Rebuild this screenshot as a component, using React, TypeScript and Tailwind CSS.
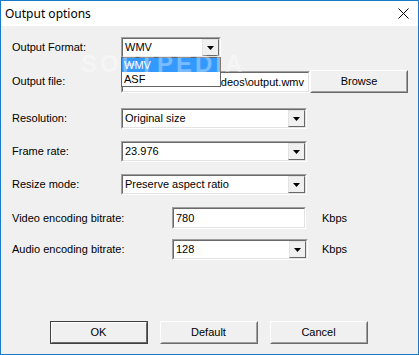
import React from "react";

const Arrow = () => (
  <svg width="7" height="4" viewBox="0 0 7 4">
    <path d="M0 0h7L3.5 4z" fill="#000" />
  </svg>
);

const Combo = ({ value, width }: { value: string; width: string }) => (
  <div
    className={`${width} h-[21px] flex border border-t-[#a0a0a0] border-l-[#a0a0a0] border-r-white border-b-white`}
  >
    <div className="flex-1 flex border border-t-[#696969] border-l-[#696969] border-r-[#e3e3e3] border-b-[#e3e3e3] bg-white">
      <span className="flex-1 pl-[2px] leading-[17px]">{value}</span>
      <div className="w-[17px] h-[17px] flex items-center justify-center bg-[#f0f0f0] border border-t-[#e3e3e3] border-l-[#e3e3e3] border-r-[#696969] border-b-[#696969]">
        <Arrow />
      </div>
    </div>
  </div>
);

const Field = ({ value, width, right }: { value: string; width: string; right?: boolean }) => (
  <div
    className={`${width} h-[22px] flex border border-t-[#a0a0a0] border-l-[#a0a0a0] border-r-white border-b-white`}
  >
    <div
      className={`flex-1 flex border border-t-[#696969] border-l-[#696969] border-r-[#e3e3e3] border-b-[#e3e3e3] bg-white leading-[18px] overflow-hidden whitespace-nowrap ${
        right ? "justify-end pr-[4px]" : "pl-[2px]"
      }`}
    >
      <span className="shrink-0">{value}</span>
    </div>
  </div>
);

const Button = ({ label, main }: { label: string; main?: boolean }) => (
  <div
    className={`w-[98px] h-[23px] flex border ${
      main
        ? "border-[#404040]"
        : "border-t-white border-l-white border-r-[#696969] border-b-[#696969]"
    }`}
  >
    <div
      className={`flex-1 flex items-center justify-center bg-[#f0f0f0] border ${
        main
          ? "border-t-white border-l-white border-r-[#696969] border-b-[#696969]"
          : "border-t-[#f0f0f0] border-l-[#f0f0f0] border-r-[#a0a0a0] border-b-[#a0a0a0]"
      }`}
    >
      {label}
    </div>
  </div>
);

const App = () => {
  return (
    <div
      className="w-[419px] h-[355px] flex flex-col border border-[#1979ca] bg-[#f0f0f0] text-[11px] text-black relative overflow-hidden"
      style={{ fontFamily: '"Liberation Sans", Arial, sans-serif' }}
    >
      <div className="h-[25px] bg-white flex items-center justify-between pl-[4px] pr-[9px]">
        <span
          className="text-[12px] leading-none"
          style={{ fontFamily: '"Noto Sans", "Open Sans", sans-serif' }}
        >
          Output options
        </span>
        <svg width="11" height="11" viewBox="0 0 11 11">
          <path d="M0.5 0.5L10.5 10.5M10.5 0.5L0.5 10.5" stroke="#000" strokeWidth="1" />
        </svg>
      </div>

      <div className="flex flex-col pl-[11px]">
        <div className="flex items-center mt-[11px]">
          <span className="w-[109px]">Output Format:</span>
          <Combo value="WMV" width="w-[100px]" />
        </div>
        <div className="flex items-center mt-[12px]">
          <span className="w-[109px]">Output file:</span>
          <Field value="C:\Users\User\Videos\output.wmv" width="w-[189px]" right />
          <Button label="Browse" />
        </div>
        <div className="flex items-center mt-[15px]">
          <span className="w-[109px]">Resolution:</span>
          <Combo value="Original size" width="w-[186px]" />
        </div>
        <div className="flex items-center mt-[12px]">
          <span className="w-[109px]">Frame rate:</span>
          <Combo value="23.976" width="w-[186px]" />
        </div>
        <div className="flex items-center mt-[12px]">
          <span className="w-[109px]">Resize mode:</span>
          <Combo value="Preserve aspect ratio" width="w-[186px]" />
        </div>
        <div className="flex items-center mt-[12px]">
          <span className="w-[160px]">Video encoding bitrate:</span>
          <Field value="780" width="w-[134px]" />
          <span className="ml-[16px]">Kbps</span>
        </div>
        <div className="flex items-center mt-[10px]">
          <span className="w-[160px]">Audio encoding bitrate:</span>
          <Combo value="128" width="w-[136px]" />
          <span className="ml-[14px]">Kbps</span>
        </div>
      </div>

      <div className="flex-1" />
      <div className="flex justify-center gap-[12px] pb-[10px] pr-[2px]">
        <Button label="OK" main />
        <Button label="Default" />
        <Button label="Cancel" />
      </div>

      <div className="absolute left-[120px] top-[56px] w-[100px] h-[30px] bg-white border border-[#646464] flex flex-col">
        <div className="h-[14px] bg-[#3399ff] text-white pl-[2px] leading-[14px]">WMV</div>
        <div className="h-[14px] pl-[2px] leading-[14px]">ASF</div>
      </div>

      <div
        className="absolute left-[80px] top-[51px] text-[24px] font-bold text-white/35 tracking-[3px] pointer-events-none leading-none"
        style={{ fontFamily: '"Liberation Sans", Arial, sans-serif' }}
      >
        SOFTPEDIA
      </div>
    </div>
  );
};

export default App;
